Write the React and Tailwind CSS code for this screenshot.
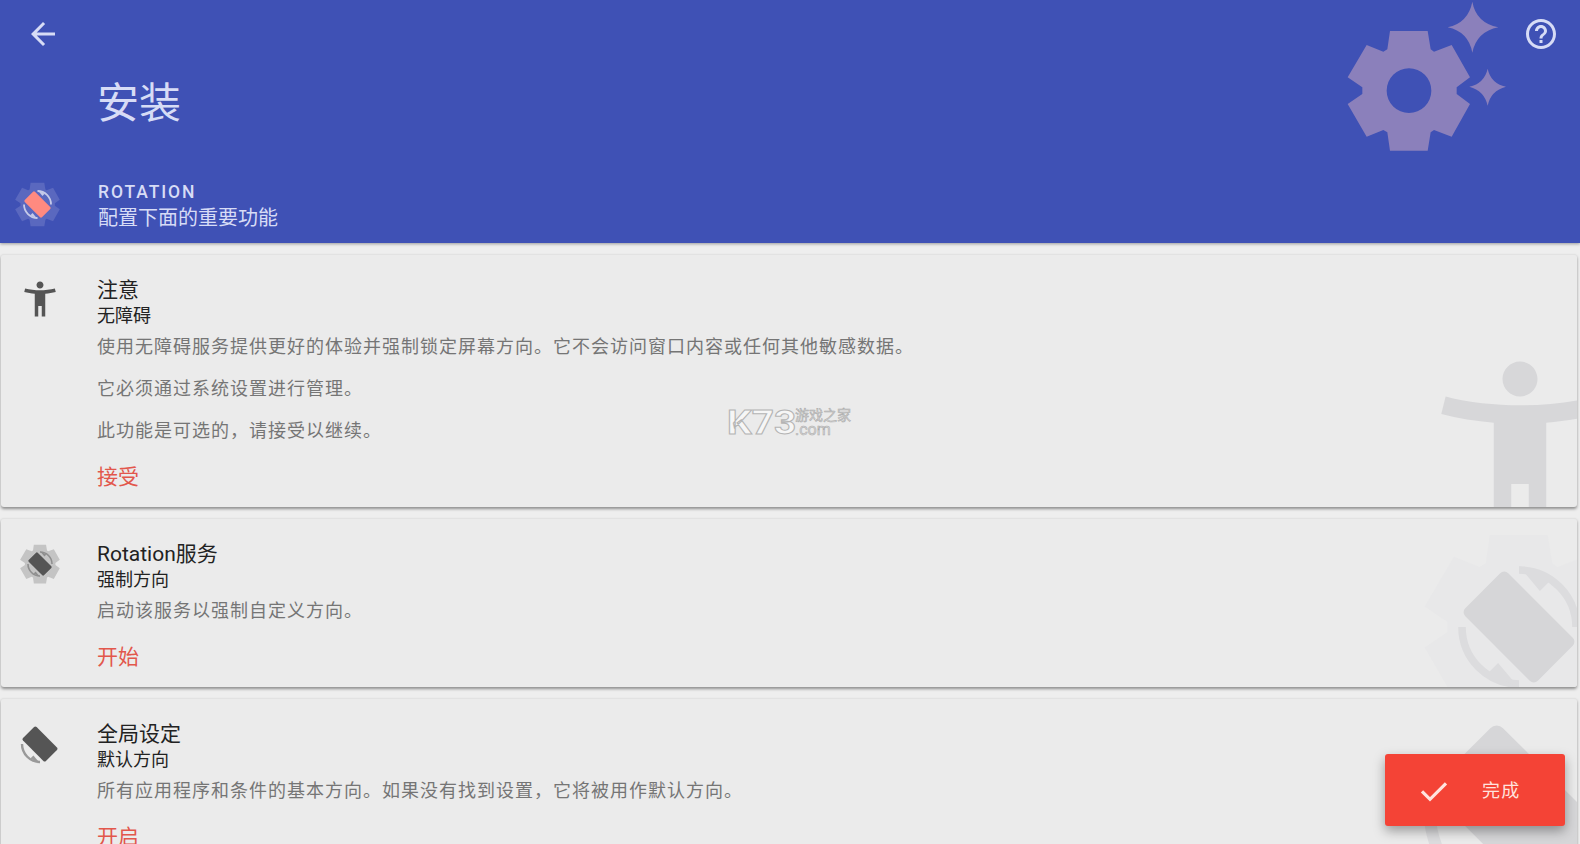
import { useState } from "react";

const GEAR = "270,93 383,93 392,148 402,155 455,135 510,232 470,262 470,282 510,312 455,410 402,390 392,397 383,452 270,452 262,397 250,390 200,410 143,312 187,282 187,262 143,232 200,135 250,155 262,148";

// gear + tilted phone + the two rotate arrows, all the "rotation" logos are this one
const RotationIcon = ({ size, gear, phone, arc, arcTop = true }) => (
    <svg width={size} height={size} viewBox="0 0 100 100" className="block">
        {gear && <polygon points={GEAR} fill={gear} transform="translate(50 50) scale(0.27) translate(-327 -272)" />}
        {arcTop && (
            <>
                <path d="M50 20A30 30 0 0 1 80 50" fill="none" stroke={arc} strokeWidth="4" />
                <polygon points="50,18 61,31 66,26" fill={arc} />
            </>
        )}
        <path d="M50 80A30 30 0 0 1 20 50" fill="none" stroke={arc} strokeWidth="4" />
        <polygon points="50,82 39,69 34,74" fill={arc} />
        <rect x="23" y="34" width="54" height="32" rx="3" fill={phone} transform="rotate(45 50 50)" />
    </svg>
);

const PersonIcon = ({ size, color }) => (
    <svg width={size} height={size} viewBox="0 0 24 24" fill={color} className="block">
        <path d="M20.5 6c-2.61.7-5.67 1-8.5 1s-5.89-.3-8.5-1L3 8c1.86.5 4 .83 6 1v13h2v-6h2v6h2V9c2-.17 4.14-.5 6-1l-.5-2zM12 6c1.1 0 2-.9 2-2s-.9-2-2-2-2 .9-2 2 .9 2 2 2z" />
    </svg>
);

const Card = ({ height, icon, iconClass, mark, markClass, title, subtitle, lines, action }) => (
    <div className={`relative ml-px mr-[3px] shrink-0 overflow-hidden rounded-[3px] border-t border-[#e2e2e2] bg-[#ebebeb] shadow-[0_2px_3px_rgba(0,0,0,0.4)] ${height}`}>
        <div className={`absolute ${markClass}`}>{mark}</div>
        <div className="relative flex">
            <div className={`w-[96px] shrink-0 ${iconClass}`}>{icon}</div>
            <div className="flex flex-col pt-[22px]">
                <div className="text-[21px] leading-[26px] text-[#222222]">{title}</div>
                <div className="text-[18px] leading-[26px] text-[#222222]">{subtitle}</div>
                <div className="mt-[5px] flex flex-col gap-4 text-[18px] leading-[26px] tracking-[1px] text-[#757575]">
                    {lines.map((line) => (
                        <p key={line}>{line}</p>
                    ))}
                </div>
                <button className="mt-[20px] text-left text-[21px] leading-[26px] text-[#e2574c]">{action}</button>
            </div>
        </div>
    </div>
);

export default function App() {
    const [done, setDone] = useState(false);

    return (
        <div className="relative flex h-[844px] flex-col gap-[11px] overflow-hidden bg-[#eeeeee] [font-family:Roboto,'Noto_Sans_CJK_SC',sans-serif]">
            <header className="relative flex h-[243px] shrink-0 flex-col bg-[#3f51b5] text-[#d7dcf6] shadow-[0_1px_3px_rgba(0,0,0,0.35)]">
                <svg width="280" height="200" viewBox="0 0 840 600" fill="#8b80bb" className="absolute right-0 top-0">
                    <path fillRule="evenodd" d={`M${GEAR.replace(/ /g, "L")}Z M394 272A67 67 0 1 0 260 272A67 67 0 1 0 394 272Z`} />
                    <path d="M517 5Q528 68 595 82Q530 95 517 158Q505 95 443 82Q505 68 517 5Z" />
                    <path d="M563 206Q572 250 618 260Q572 272 563 317Q553 272 508 260Q553 250 563 206Z" />
                </svg>
                <div className="relative flex items-center justify-between pb-[16px] pl-[25px] pr-[21px] pt-[16px]">
                    <svg width="36" height="36" viewBox="0 0 24 24" fill="currentColor">
                        <path d="M20 11H7.83l5.59-5.59L12 4l-8 8 8 8 1.41-1.41L7.83 13H20v-2z" />
                    </svg>
                    <svg width="36" height="36" viewBox="0 0 24 24" fill="currentColor">
                        <path d="M11 18h2v-2h-2v2zm1-16C6.48 2 2 6.48 2 12s4.48 10 10 10 10-4.48 10-10S17.52 2 12 2zm0 18c-4.41 0-8-3.59-8-8s3.59-8 8-8 8 3.59 8 8-3.59 8-8 8zm0-14c-2.21 0-4 1.79-4 4h2c0-1.1.9-2 2-2s2 .9 2 2c0 2-3 1.75-3 5h2c0-2.25 3-2.5 3-5 0-2.21-1.79-4-4-4z" />
                    </svg>
                </div>
                <h1 className="relative mt-[6px] pl-[97px] text-[42px] leading-[60px]">安装</h1>
                <div className="relative mt-auto flex items-center pb-[12px] pl-[15px]">
                    <div className="mb-[2px] w-[83px] shrink-0">
                        <RotationIcon size={45} gear="#5a68bf" phone="#ff8a80" arc="#c5cae9" />
                    </div>
                    <div>
                        <div className="text-[17.5px] font-medium leading-[26px] tracking-[1.9px]">ROTATION</div>
                        <div className="text-[20px] leading-[26px]">配置下面的重要功能</div>
                    </div>
                </div>
            </header>

            <Card
                height="h-[253px]"
                icon={<PersonIcon size={42} color="#555555" />}
                iconClass="pl-[18px] pt-[23px]"
                mark={<PersonIcon size={210} color="#d7d7d9" />}
                markClass="right-[-48px] top-[89px]"
                title="注意"
                subtitle="无障碍"
                lines={[
                    "使用无障碍服务提供更好的体验并强制锁定屏幕方向。它不会访问窗口内容或任何其他敏感数据。",
                    "它必须通过系统设置进行管理。",
                    "此功能是可选的，请接受以继续。",
                ]}
                action="接受"
            />
            <Card
                height="h-[169px]"
                icon={<RotationIcon size={40} gear="#c4c4c4" phone="#555555" arc="#8f8f8f" />}
                iconClass="pl-[19px] pt-[25px]"
                mark={<RotationIcon size={190} gear="#e8e8e9" phone="#d6d6d8" arc="#dcdcde" />}
                markClass="right-[-37px] top-[13px]"
                title="Rotation服务"
                subtitle="强制方向"
                lines={["启动该服务以强制自定义方向。"]}
                action="开始"
            />
            <Card
                height="h-[170px]"
                icon={<RotationIcon size={60} phone="#555555" arc="#999999" arcTop={false} />}
                iconClass="pl-[9px] pt-[15px]"
                mark={<RotationIcon size={300} phone="#d6d6d8" arc="#dcdcde" arcTop={false} />}
                markClass="right-[-93px] top-[-36px]"
                title="全局设定"
                subtitle="默认方向"
                lines={["所有应用程序和条件的基本方向。如果没有找到设置，它将被用作默认方向。"]}
                action="开启"
            />

            {/* site watermark on top of the screenshot */}
            <div className="pointer-events-none absolute left-[727px] top-[405px] flex items-center text-[#f6f6f6]">
                <span className="w-[68px] origin-left scale-x-[1.14] text-[34px] font-bold leading-[34px] [-webkit-text-stroke:1px_#b4b4b4]">K73</span>
                <span className="flex flex-col items-start text-[#d8d8d8] [-webkit-text-stroke:0.5px_#a8a8a8]">
                    <span className="text-[14px] leading-[15px]">游戏之家</span>
                    <span className="text-[16px] leading-[13px]">.com</span>
                </span>
            </div>

            <button
                onClick={() => setDone(!done)}
                className="absolute left-[1385px] top-[754px] flex h-[72px] w-[180px] items-center rounded-[3px] bg-[#f44336] pl-[33px] text-[#ffe3df] shadow-[0_5px_12px_rgba(0,0,0,0.35)]"
            >
                <svg width="32" height="32" viewBox="0 0 24 24" fill="none" stroke="currentColor" strokeWidth="2.4">
                    <path d="M3 13l6 6L21 7" />
                </svg>
                <span className="ml-[32px] text-[18px] tracking-[1.2px]">完成</span>
            </button>
        </div>
    );
}
